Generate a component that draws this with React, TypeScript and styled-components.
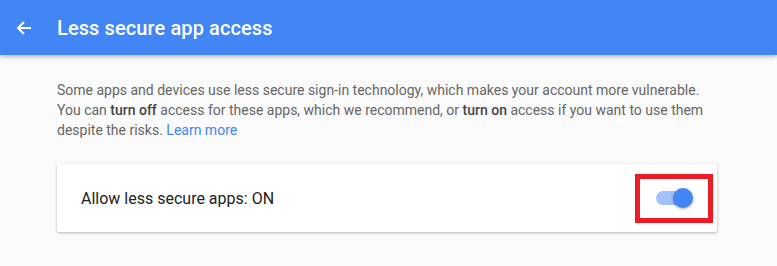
import styled, { createGlobalStyle } from 'styled-components';

const GlobalStyle = createGlobalStyle`
  html, body {
    margin: 0;
    padding: 0;
    background: #fafafa;
    font-family: Roboto, "Noto Sans", Arial, sans-serif;
  }
`;

const Page = styled.div`
  min-height: 266px;
  background: #fafafa;
`;

const Header = styled.header`
  height: 55px;
  background: #4285f4;
  display: flex;
  align-items: center;
  padding-left: 16px;
  gap: 25px;
  box-shadow: 0 2px 4px rgba(0, 0, 0, 0.25);
  position: relative;
`;

const BackButton = styled.button`
  border: 0;
  background: none;
  padding: 0;
  width: 16px;
  height: 16px;
  display: flex;
  cursor: pointer;
`;

const Title = styled.h1`
  margin: 0;
  color: #fff;
  font-size: 20px;
  font-weight: 500;
  letter-spacing: 0.1px;
`;

const Content = styled.main`
  padding: 25px 60px 0 57px;
  display: flex;
  flex-direction: column;
  gap: 24px;
`;

const Intro = styled.p`
  margin: 0;
  font-size: 14px;
  line-height: 20px;
  color: #666;
  max-width: 660px;

  b {
    color: #444;
    font-weight: 500;
  }
`;

const Link = styled.a`
  color: #4285f4;
  text-decoration: none;
`;

const Card = styled.section`
  width: 660px;
  height: 68px;
  background: #fff;
  border-radius: 2px;
  box-shadow: 0 1px 3px rgba(0, 0, 0, 0.28);
  display: flex;
  align-items: center;
  justify-content: space-between;
  padding: 0 4px 0 24px;
  box-sizing: border-box;
`;

const Label = styled.span`
  font-size: 16px;
  color: #222;
`;

const Highlight = styled.div`
  width: 78px;
  height: 49px;
  box-sizing: border-box;
  border: 5px solid #ed1c24;
  display: flex;
  align-items: center;
  padding-left: 16px;
`;

const Switch = styled.div<{ $on: boolean }>`
  position: relative;
  width: 36px;
  height: 14px;
  border-radius: 7px;
  background: ${(p) => (p.$on ? '#a1c2fa' : '#bdbdbd')};
`;

const Knob = styled.span<{ $on: boolean }>`
  position: absolute;
  top: -3px;
  left: ${(p) => (p.$on ? '17px' : '-2px')};
  width: 20px;
  height: 20px;
  border-radius: 50%;
  background: ${(p) => (p.$on ? '#4285f4' : '#f1f1f1')};
  box-shadow: 0 1px 3px rgba(0, 0, 0, 0.35);
`;

export default function App() {
  const on = true;
  return (
    <>
      <GlobalStyle />
      <Page>
        <Header>
          <BackButton aria-label="Back">
            <svg width="16" height="16" viewBox="0 0 16 16" fill="none">
              <path d="M15 8H2M8 2L2 8l6 6" stroke="#fff" strokeWidth="2" />
            </svg>
          </BackButton>
          <Title>Less secure app access</Title>
        </Header>
        <Content>
          <Intro>
            Some apps and devices use less secure sign-in technology, which makes your account more vulnerable.
            You can <b>turn off</b> access for these apps, which we recommend, or <b>turn on</b> access if you want
            to use them despite the risks. <Link href="#">Learn more</Link>
          </Intro>
          <Card>
            <Label>Allow less secure apps: {on ? 'ON' : 'OFF'}</Label>
            <Highlight>
              <Switch $on={on}>
                <Knob $on={on} />
              </Switch>
            </Highlight>
          </Card>
        </Content>
      </Page>
    </>
  );
}
